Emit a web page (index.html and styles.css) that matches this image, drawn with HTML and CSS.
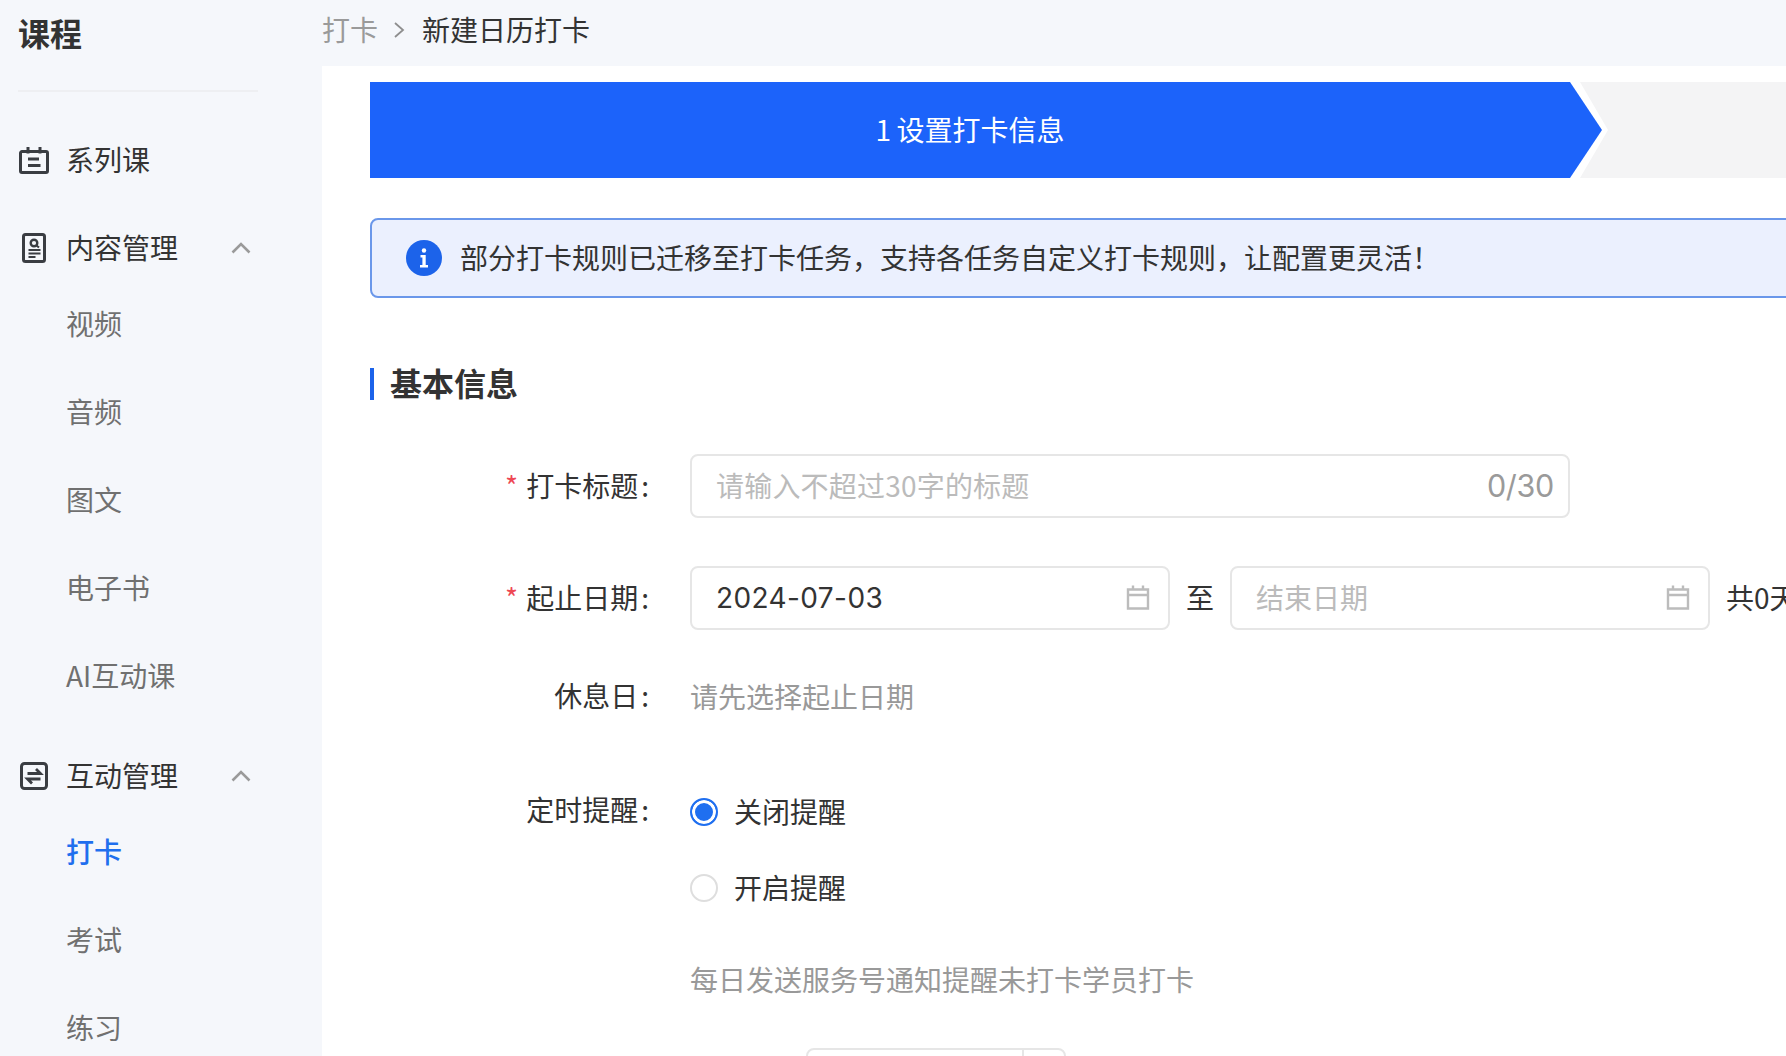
FILE: index.html
```html
<!DOCTYPE html>
<html lang="zh-CN">
<head>
<meta charset="utf-8">
<title>新建日历打卡</title>
<link rel="stylesheet" href="styles.css">
</head>
<body>
<aside class="sidebar">
  <h1 class="side-title">课程</h1>
  <div class="side-divider"></div>
  <nav class="menu">
    <div class="menu-head menu-first">
      <svg class="menu-icon" viewBox="0 0 30 30"><path d="M3 6.500h24a1.500 1.500 0 0 1 1.500 1.500v18a1.500 1.500 0 0 1-1.500 1.500H3A1.500 1.500 0 0 1 1.500 26V8A1.500 1.500 0 0 1 3 6.500zM9 2v6.500M21 2v6.500M9 14h11M9 20.500h12.500" fill="none" stroke="#3a3d42" stroke-width="3"/></svg>
      <span class="menu-text">系列课</span>
    </div>
    <div class="menu-head">
      <svg class="menu-icon" viewBox="0 0 30 30"><rect x="4.500" y="1.500" width="21" height="27" rx="2" fill="none" stroke="#3a3d42" stroke-width="3"/><circle cx="15" cy="10" r="3.300" fill="none" stroke="#3a3d42" stroke-width="2.400"/><path d="M17.500 12.500l2.500 2M9.500 17h12M9.500 20.500h12M9.500 24h7" fill="none" stroke="#3a3d42" stroke-width="2.200"/></svg>
      <span class="menu-text">内容管理</span>
      <svg class="chevron" viewBox="0 0 20 12"><path d="M1.500 10.500L10 2l8.500 8.500" fill="none" stroke="#9a9a9a" stroke-width="2.600"/></svg>
    </div>
    <a class="sub sub-first">视频</a>
    <a class="sub">音频</a>
    <a class="sub">图文</a>
    <a class="sub">电子书</a>
    <a class="sub">AI互动课</a>
    <div class="menu-head menu-group">
      <svg class="menu-icon" viewBox="0 0 30 30"><rect x="2.500" y="2.500" width="25" height="25" rx="3" fill="none" stroke="#3a3d42" stroke-width="3"/><path d="M8.500 12.500h13l-4.500-4.500M21.500 18h-13l4.500 4.500" fill="none" stroke="#3a3d42" stroke-width="2.800"/></svg>
      <span class="menu-text">互动管理</span>
      <svg class="chevron" viewBox="0 0 20 12"><path d="M1.500 10.500L10 2l8.500 8.500" fill="none" stroke="#9a9a9a" stroke-width="2.600"/></svg>
    </div>
    <a class="sub sub-first sub-active">打卡</a>
    <a class="sub">考试</a>
    <a class="sub">练习</a>
  </nav>
</aside>
<div class="main">
  <header class="crumbs">
    <span class="crumb-parent">打卡</span>
    <svg class="crumb-sep" viewBox="0 0 12 18"><path d="M2 2l8 7-8 7" fill="none" stroke="#8e8e8e" stroke-width="1.800"/></svg>
    <span class="crumb-current">新建日历打卡</span>
  </header>
  <section class="panel">
    <div class="steps">
      <div class="step-cut">
        <div class="step-active">1 设置打卡信息</div>
      </div>
    </div>
    <div class="alert">
      <svg class="alert-icon" viewBox="0 0 36 36"><circle cx="18" cy="18" r="18" fill="#1c63ea"/><circle cx="18" cy="10.500" r="2.200" fill="#fff"/><path d="M14.500 15h5.200v10h2.300v2.500h-8V25h2.400v-7.500h-1.900z" fill="#fff"/></svg>
      <span>部分打卡规则已迁移至打卡任务，支持各任务自定义打卡规则，让配置更灵活！</span>
    </div>
    <h2 class="section-title">基本信息</h2>
    <div class="row row-title">
      <label class="label"><i class="req">*</i>打卡标题<span class="colon">:</span></label>
      <div class="input input-wide">
        <span class="placeholder placeholder-long">请输入不超过30字的标题</span>
        <span class="counter">0/30</span>
      </div>
    </div>
    <div class="row row-date">
      <label class="label"><i class="req">*</i>起止日期<span class="colon">:</span></label>
      <div class="input input-date">
        <span class="value">2024-07-03</span>
        <svg class="cal" viewBox="0 0 24 26"><path d="M2 5.500h20v19H2zM2 11h20M7 1.500v5M17 1.500v5" fill="none" stroke="#bcbcbc" stroke-width="2.400"/></svg>
      </div>
      <span class="to">至</span>
      <div class="input input-date">
        <span class="placeholder">结束日期</span>
        <svg class="cal" viewBox="0 0 24 26"><path d="M2 5.500h20v19H2zM2 11h20M7 1.500v5M17 1.500v5" fill="none" stroke="#bcbcbc" stroke-width="2.400"/></svg>
      </div>
      <span class="total">共0天</span>
    </div>
    <div class="row row-rest">
      <label class="label">休息日<span class="colon">:</span></label>
      <span class="muted">请先选择起止日期</span>
    </div>
    <div class="row row-remind">
      <label class="label">定时提醒<span class="colon">:</span></label>
      <div class="remind">
        <div class="radio-line"><span class="radio radio-on"></span>关闭提醒</div>
        <div class="radio-line radio-second"><span class="radio"></span>开启提醒</div>
        <p class="muted hint">每日发送服务号通知提醒未打卡学员打卡</p>
        <div class="time-box"><span class="time-split"></span></div>
      </div>
    </div>
  </section>
</div>
</body>
</html>
```
FILE: styles.css
```css
* { box-sizing: border-box; }
html, body { height: 100%; }
body {
  margin: 0;
  height: 1056px;
  overflow: hidden;
  display: flex;
  background: #f5f7fb;
  color: #333;
  font-family: "Noto Sans CJK SC", "Inter", sans-serif;
  font-size: 28px;
  line-height: 40px;
}
.sidebar { width: 322px; flex: none; padding: 0 0 0 18px; }
.side-title { margin: 0; height: 70px; font-size: 32px; font-weight: 700; line-height: 64px; color: #333; }
.side-divider { width: 240px; height: 2px; margin-top: 20px; background: #eeeff2; }
.menu { display: flex; flex-direction: column; }
.menu-head { display: flex; align-items: center; height: 40px; margin-top: 48px; color: #333; }
.menu-group { margin-top: 60px; }
.menu-icon { width: 30px; height: 30px; flex: none; margin: 0 17px 0 1px; }
.menu-text { flex: none; line-height: 38px; margin-bottom: 2px; }
.chevron { width: 20px; height: 12px; margin-left: 53px; flex: none; }
.sub { display: block; height: 40px; margin-top: 48px; padding-left: 48px; color: #707070; line-height: 38px; }
.sub-first { margin-top: 36px; }
.sub-active { color: #1f6fee; font-weight: 500; }
.main { flex: 1; min-width: 0; display: flex; flex-direction: column; }
.crumbs { height: 66px; flex: none; display: flex; align-items: flex-start; padding-top: 9px; }
.crumb-parent { color: #9a9a9a; }
.crumb-sep { width: 12px; height: 18px; margin: 12px 17px 0 15px; flex: none; }
.crumb-current { color: #333; }
.panel { flex: 1; background: #fff; padding: 16px 0 0 48px; overflow: hidden; }
.steps { height: 96px; width: 1416px; background: #f4f4f5; }
.step-cut {
  width: 1238px;
  height: 96px;
  background: #fff;
  clip-path: polygon(0 0, 1210px 0, 100% 50%, 1210px 100%, 0 100%);
}
.step-active {
  width: 1232px;
  height: 96px;
  padding-right: 32px;
  background: #1c63fa;
  color: #fff;
  text-align: center;
  word-spacing: -1px;
  line-height: 94px;
  clip-path: polygon(0 0, 1200px 0, 100% 50%, 1200px 100%, 0 100%);
}
.alert {
  width: 1480px;
  height: 80px;
  margin-top: 40px;
  display: flex;
  align-items: center;
  padding: 0 0 2px 34px;
  background: #ebf0fe;
  border: 2px solid #6a97ea;
  border-radius: 8px;
}
.alert-icon { width: 36px; height: 36px; margin: 2px 18px 0 0; flex: none; }
.section-title {
  height: 32px;
  margin: 70px 0 0;
  padding-left: 16px;
  border-left: 4px solid #1c63ea;
  font-size: 32px;
  font-weight: 700;
  line-height: 28px;
  color: #333;
}
.row { display: flex; align-items: center; }
.row-title { margin-top: 54px; }
.row-date { margin-top: 48px; }
.row-rest { margin-top: 46px; height: 40px; }
.row-remind { margin-top: 74px; align-items: flex-start; }
.label { width: 280px; flex: none; margin: 0 40px 2px 0; text-align: right; color: #333; line-height: 38px; }
.colon { margin: 0 1px 0 3px; }
.req { font-style: normal; color: #ee4854; margin-right: 8px; font-size: 28px; }
.input {
  height: 64px;
  display: flex;
  align-items: center;
  justify-content: space-between;
  padding: 0 18px 2px 24px;
  border: 2px solid #e6e6e6;
  border-radius: 8px;
  background: #fff;
}
.input-wide { width: 880px; flex: none; padding-right: 14px; }
.input-date { width: 480px; flex: none; }
.placeholder { color: #bbb; }
.placeholder-long { letter-spacing: 0.200px; }
.counter { color: #9a9a9a; font-family: "Inter", "Liberation Sans", sans-serif; font-size: 30.500px; margin-top: 2px; letter-spacing: -0.300px; }
.value { color: #333; font-family: "Inter", "Liberation Sans", sans-serif; letter-spacing: 0.400px; margin-top: 2px; }
.cal { width: 24px; height: 26px; flex: none; }
.to { width: 60px; flex: none; text-align: center; line-height: 38px; margin-bottom: 2px; }
.total { margin-left: 16px; white-space: nowrap; line-height: 38px; margin-bottom: 2px; }
.muted { color: #999; }
.remind { display: flex; flex-direction: column; margin-top: 2px; }
.radio-line { display: flex; align-items: center; height: 40px; padding-bottom: 2px; white-space: nowrap; }
.radio-second { margin-top: 36px; }
.radio {
  width: 28px;
  height: 28px;
  margin: 2px 16px 0 0;
  border: 2px solid #dedede;
  border-radius: 50%;
  flex: none;
  background: #fff;
}
.radio-on { border-color: #1f6ff0; background: #1f6ff0; box-shadow: inset 0 0 0 3px #fff; }
.hint { margin: 51px 0 0; white-space: nowrap; }
.time-box {
  width: 260px;
  height: 64px;
  margin: 49px 0 0 116px;
  border: 2px solid #e6e6e6;
  border-radius: 8px;
  display: flex;
  justify-content: flex-end;
}
.time-split { width: 42px; border-left: 2px solid #e6e6e6; }
```
